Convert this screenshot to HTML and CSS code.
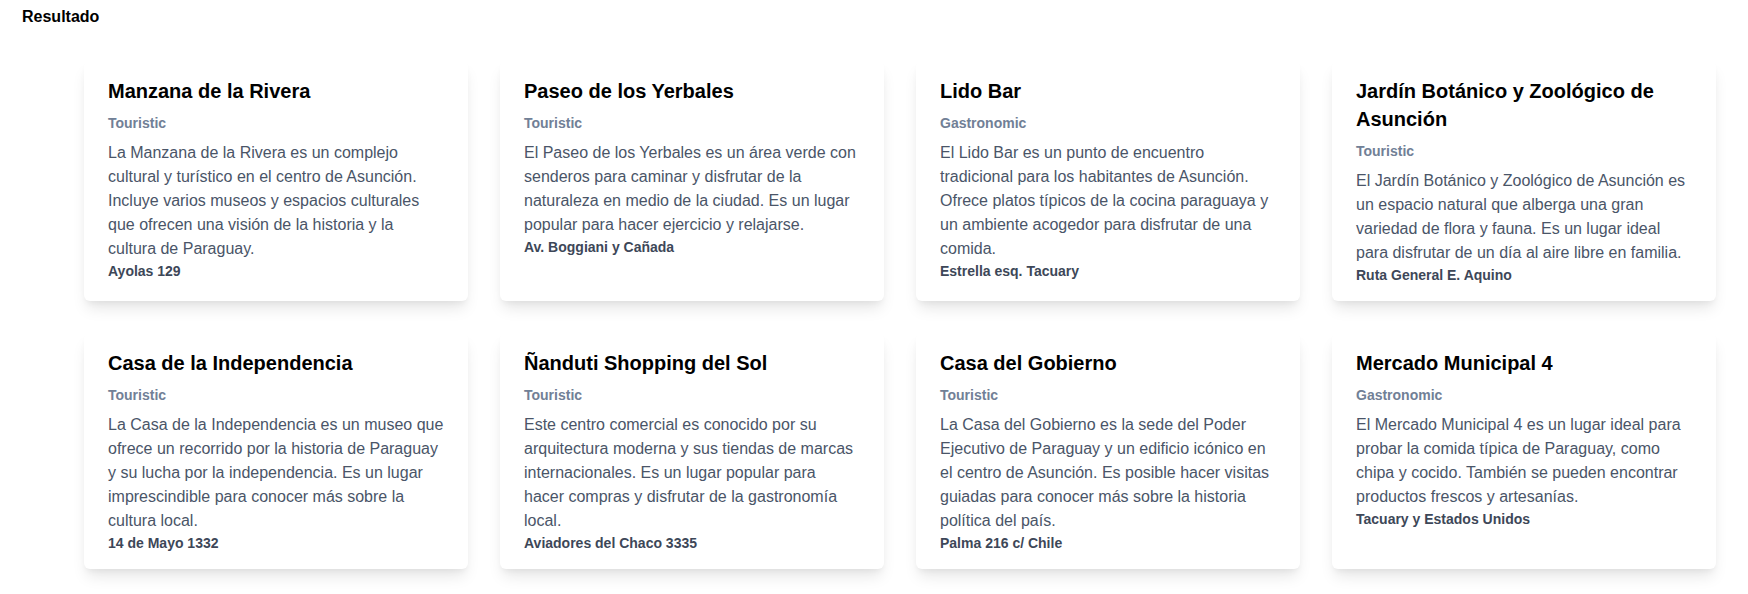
FILE: index.html
```html
<!DOCTYPE html>
<html lang="es">
<head>
<meta charset="utf-8">
<title>Resultado</title>
<link rel="stylesheet" href="styles.css">
</head>
<body>
<header class="page-header">Resultado</header>
<main class="grid">
  <article class="card">
    <h2 class="card-title">Manzana de la Rivera</h2>
    <p class="card-cat">Touristic</p>
    <p class="card-desc">La Manzana de la Rivera es un complejo cultural y turístico en el centro de Asunción. Incluye varios museos y espacios culturales que ofrecen una visión de la historia y la cultura de Paraguay.</p>
    <p class="card-addr">Ayolas 129</p>
  </article>
  <article class="card">
    <h2 class="card-title">Paseo de los Yerbales</h2>
    <p class="card-cat">Touristic</p>
    <p class="card-desc">El Paseo de los Yerbales es un área verde con senderos para caminar y disfrutar de la naturaleza en medio de la ciudad. Es un lugar popular para hacer ejercicio y relajarse.</p>
    <p class="card-addr">Av. Boggiani y Cañada</p>
  </article>
  <article class="card">
    <h2 class="card-title">Lido Bar</h2>
    <p class="card-cat">Gastronomic</p>
    <p class="card-desc">El Lido Bar es un punto de encuentro tradicional para los habitantes de Asunción. Ofrece platos típicos de la cocina paraguaya y un ambiente acogedor para disfrutar de una comida.</p>
    <p class="card-addr">Estrella esq. Tacuary</p>
  </article>
  <article class="card">
    <h2 class="card-title">Jardín Botánico y Zoológico de Asunción</h2>
    <p class="card-cat">Touristic</p>
    <p class="card-desc">El Jardín Botánico y Zoológico de Asunción es un espacio natural que alberga una gran variedad de flora y fauna. Es un lugar ideal para disfrutar de un día al aire libre en familia.</p>
    <p class="card-addr">Ruta General E. Aquino</p>
  </article>
  <article class="card">
    <h2 class="card-title">Casa de la Independencia</h2>
    <p class="card-cat">Touristic</p>
    <p class="card-desc">La Casa de la Independencia es un museo que ofrece un recorrido por la historia de Paraguay y su lucha por la independencia. Es un lugar imprescindible para conocer más sobre la cultura local.</p>
    <p class="card-addr">14 de Mayo 1332</p>
  </article>
  <article class="card">
    <h2 class="card-title">Ñanduti Shopping del Sol</h2>
    <p class="card-cat">Touristic</p>
    <p class="card-desc">Este centro comercial es conocido por su arquitectura moderna y sus tiendas de marcas internacionales. Es un lugar popular para hacer compras y disfrutar de la gastronomía local.</p>
    <p class="card-addr">Aviadores del Chaco 3335</p>
  </article>
  <article class="card">
    <h2 class="card-title">Casa del Gobierno</h2>
    <p class="card-cat">Touristic</p>
    <p class="card-desc">La Casa del Gobierno es la sede del Poder Ejecutivo de Paraguay y un edificio icónico en el centro de Asunción. Es posible hacer visitas guiadas para conocer más sobre la historia política del país.</p>
    <p class="card-addr">Palma 216 c/ Chile</p>
  </article>
  <article class="card">
    <h2 class="card-title">Mercado Municipal 4</h2>
    <p class="card-cat">Gastronomic</p>
    <p class="card-desc">El Mercado Municipal 4 es un lugar ideal para probar la comida típica de Paraguay, como chipa y cocido. También se pueden encontrar productos frescos y artesanías.</p>
    <p class="card-addr">Tacuary y Estados Unidos</p>
  </article>
</main>
</body>
</html>
```
FILE: styles.css
```css
* { box-sizing: border-box; }

body {
  margin: 0;
  background: #ffffff;
  font-family: "Liberation Sans", Arial, sans-serif;
  color: #000;
}

.page-header {
  padding: 8px 22px 0;
  font-size: 16px;
  font-weight: 700;
  line-height: 18px;
}

.grid {
  display: grid;
  grid-template-columns: repeat(4, 384px);
  column-gap: 32px;
  row-gap: 32px;
  padding: 35px 32px 24px 84px;
}

.card {
  background: #fff;
  border-radius: 6px;
  padding: 16px 24px;
  box-shadow: 0 10px 15px -3px rgba(0, 0, 0, 0.1), 0 4px 6px -2px rgba(0, 0, 0, 0.05);
}

.card-title {
  margin: 0 0 8px;
  font-size: 20px;
  line-height: 28px;
  font-weight: 700;
  color: #000;
}

.card-cat {
  margin: 0 0 8px;
  font-size: 14px;
  line-height: 20px;
  font-weight: 700;
  color: #718096;
}

.card-desc {
  margin: 0;
  font-size: 16px;
  line-height: 24px;
  color: #4a5568;
}

.card-addr {
  margin: 0;
  font-size: 14px;
  line-height: 20px;
  font-weight: 700;
  color: #3d4758;
}
```
